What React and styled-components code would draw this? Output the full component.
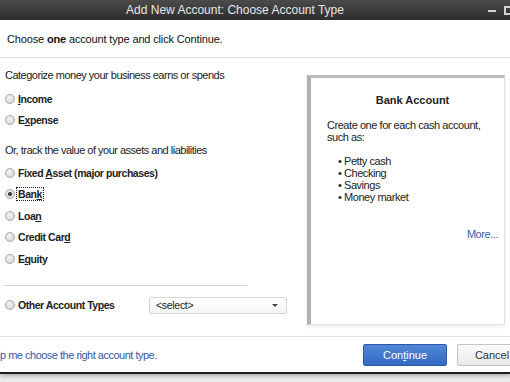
import React from "react";
import styled, { createGlobalStyle } from "styled-components";

const GlobalStyle = createGlobalStyle`
    html, body {
        margin: 0;
        padding: 0;
        width: 510px;
        height: 382px;
        overflow: hidden;
        background: #ececec;
        font-family: "Liberation Sans", Arial, sans-serif;
    }
`

const Window = styled.div`
    width: 510px;
    height: 372px;
    background: #fff;
    border-bottom: 2px solid #1e1e1e;
    box-shadow: 0 2px 4px rgba(0, 0, 0, 0.25);
    display: flex;
    flex-direction: column;
    overflow: hidden;
`

const TitleBar = styled.div`
    height: 20px;
    flex: none;
    display: flex;
    align-items: center;
    background: linear-gradient(#4b4b4b, #2c2c2c);
`

const Title = styled.div`
    flex: 1;
    text-align: center;
    color: #e6e6e6;
    font-size: 12px;
`

const Controls = styled.div`
    width: 40px;
    flex: none;
    display: flex;
    align-items: center;
    padding-left: 18px;
    box-sizing: border-box;
`

const MinBtn = styled.span`
    width: 8px;
    height: 2px;
    margin-top: 2px;
    background: #d2d2d2;
    flex: none;
`

const MaxBtn = styled.span`
    width: 8px;
    height: 5px;
    margin-left: 8px;
    border: 2px solid #d2d2d2;
    flex: none;
`

const Intro = styled.div`
    height: 37px;
    flex: none;
    display: flex;
    align-items: center;
    padding-left: 7px;
    font-size: 11px;
    letter-spacing: -0.15px;
    color: #111;
    border-bottom: 1px solid #dedede;
`

const Main = styled.div`
    flex: 1;
    display: flex;
    border-bottom: 1px solid #dcdcdc;
`

const LeftCol = styled.div`
    width: 307px;
    flex: none;
    padding: 10px 0 0 5px;
    box-sizing: border-box;
    display: flex;
    flex-direction: column;
`

const Heading = styled.div`
    line-height: 14px;
    font-size: 11px;
    letter-spacing: -0.5px;
    color: #222;
    margin-top: ${p => p.$top || 0}px;
`

const Group = styled.div`
    margin-top: ${p => p.$top || 0}px;
    display: flex;
    flex-direction: column;
`

const Row = styled.div`
    height: 21.5px;
    display: flex;
    align-items: center;
    gap: 1px;
    font-size: 10.5px;
    letter-spacing: -0.45px;
    font-weight: bold;
    color: #222;
`

const Radio = styled.span`
    width: 8px;
    height: 8px;
    border-radius: 50%;
    border: 1px solid #a9a9a9;
    background: radial-gradient(circle at 40% 35%, #f4f4f4, #cdcdcd);
    display: flex;
    align-items: center;
    justify-content: center;
    flex: none;
    &::after {
        content: "";
        width: 4px;
        height: 4px;
        border-radius: 50%;
        background: ${p => (p.$checked ? "#333" : "transparent")};
    }
`

const Label = styled.span`
    padding: 0 1px;
    border: 1px dotted ${p => (p.$focus ? "#222" : "transparent")};
    line-height: 12px;
`

const Divider = styled.div`
    width: 243px;
    height: 1px;
    background: #d4d4d4;
    margin: 15px 0 9px -1px;
`

const OtherLabel = styled.span`
    display: flex;
    align-items: center;
    gap: 1px;
    width: 143px;
`

const Select = styled.div`
    width: 138px;
    height: 17px;
    box-sizing: border-box;
    border: 1px solid #d6d6d6;
    border-radius: 2px;
    background: linear-gradient(#fff, #f4f4f4);
    display: flex;
    align-items: center;
    justify-content: space-between;
    padding: 0 8px 0 6px;
    font-weight: normal;
    font-size: 10.5px;
    letter-spacing: -0.3px;
    color: #222;
`

const Arrow = styled.span`
    width: 0;
    height: 0;
    border-left: 3px solid transparent;
    border-right: 3px solid transparent;
    border-top: 3px solid #444;
`

const InfoPanel = styled.div`
    width: 198px;
    height: 250px;
    margin-top: 17px;
    box-sizing: border-box;
    border-left: 4px solid #b0b0b0;
    border-top: 3px solid #bcbcbc;
    border-right: 1px solid #e0e0e0;
    border-bottom: 1px solid #e6e6e6;
    box-shadow: 0 2px 3px rgba(0, 0, 0, 0.08);
    padding: 15px 6px 0 16px;
    display: flex;
    flex-direction: column;
    font-size: 11px;
    letter-spacing: -0.45px;
    color: #222;
`

const PanelTitle = styled.div`
    text-align: center;
    font-weight: bold;
    font-size: 11px;
    letter-spacing: 0;
    line-height: 14px;
`

const PanelText = styled.div`
    margin-top: 13px;
    line-height: 11.5px;
`

const Bullets = styled.ul`
    list-style: none;
    margin: 12px 0 0 11px;
    padding: 0;
    line-height: 12px;
`

const More = styled.a`
    align-self: flex-end;
    margin-top: 25px;
    color: #3e5db0;
    text-decoration: none;
`

const Footer = styled.div`
    height: 35px;
    flex: none;
    display: flex;
    align-items: center;
    font-size: 11px;
`

const HelpLink = styled.a`
    color: #3b58a8;
    margin-left: -15px;
    letter-spacing: -0.5px;
    text-decoration: none;
    white-space: nowrap;
`

const Buttons = styled.div`
    margin-left: auto;
    display: flex;
    gap: 10px;
    margin-right: -17px;
    margin-top: 1px;
`

const Button = styled.div`
    width: ${p => (p.$primary ? 84 : 70)}px;
    height: 22px;
    box-sizing: border-box;
    border-radius: 2px;
    display: flex;
    align-items: center;
    justify-content: center;
    font-size: 11px;
    color: ${p => (p.$primary ? "#fff" : "#333")};
    border: 1px solid ${p => (p.$primary ? "#2c5aa8" : "#c4c4c4")};
    background: ${p =>
        p.$primary
            ? "linear-gradient(#5288d6, #3468c4)"
            : "linear-gradient(#fbfbfb, #e9e9e9)"};
`

const U = styled.span`
    text-decoration: underline;
`

const bullets = ["Petty cash", "Checking", "Savings", "Money market"]

export default function App() {
    return (
        <>
            <GlobalStyle />
            <Window>
                <TitleBar>
                    <Title>Add New Account: Choose Account Type</Title>
                    <Controls>
                        <MinBtn />
                        <MaxBtn />
                    </Controls>
                </TitleBar>
                <Intro>
                    <span>Choose <b>one</b> account type and click Continue.</span>
                </Intro>
                <Main>
                    <LeftCol>
                        <Heading>Categorize money your business earns or spends</Heading>
                        <Group $top={6}>
                            <Row><Radio /><Label><U>I</U>ncome</Label></Row>
                            <Row><Radio /><Label>E<U>x</U>pense</Label></Row>
                        </Group>
                        <Heading $top={12}>Or, track the value of your assets and liabilities</Heading>
                        <Group $top={5}>
                            <Row><Radio /><Label>Fixed <U>A</U>sset (major purchases)</Label></Row>
                            <Row><Radio $checked /><Label $focus>Ban<U>k</U></Label></Row>
                            <Row><Radio /><Label>Loa<U>n</U></Label></Row>
                            <Row><Radio /><Label>Credit Car<U>d</U></Label></Row>
                            <Row><Radio /><Label>E<U>q</U>uity</Label></Row>
                        </Group>
                        <Divider />
                        <Row>
                            <OtherLabel><Radio /><Label>Other Account Ty<U>p</U>es</Label></OtherLabel>
                            <Select>&lt;select&gt;<Arrow /></Select>
                        </Row>
                    </LeftCol>
                    <InfoPanel>
                        <PanelTitle>Bank Account</PanelTitle>
                        <PanelText>Create one for each cash account,<br />such as:</PanelText>
                        <Bullets>
                            {bullets.map(b => <li key={b}>• {b}</li>)}
                        </Bullets>
                        <More>More...</More>
                    </InfoPanel>
                </Main>
                <Footer>
                    <HelpLink>Help me choose the right account type.</HelpLink>
                    <Buttons>
                        <Button $primary>Con<U>t</U>inue</Button>
                        <Button>Cancel</Button>
                    </Buttons>
                </Footer>
            </Window>
        </>
    )
}
